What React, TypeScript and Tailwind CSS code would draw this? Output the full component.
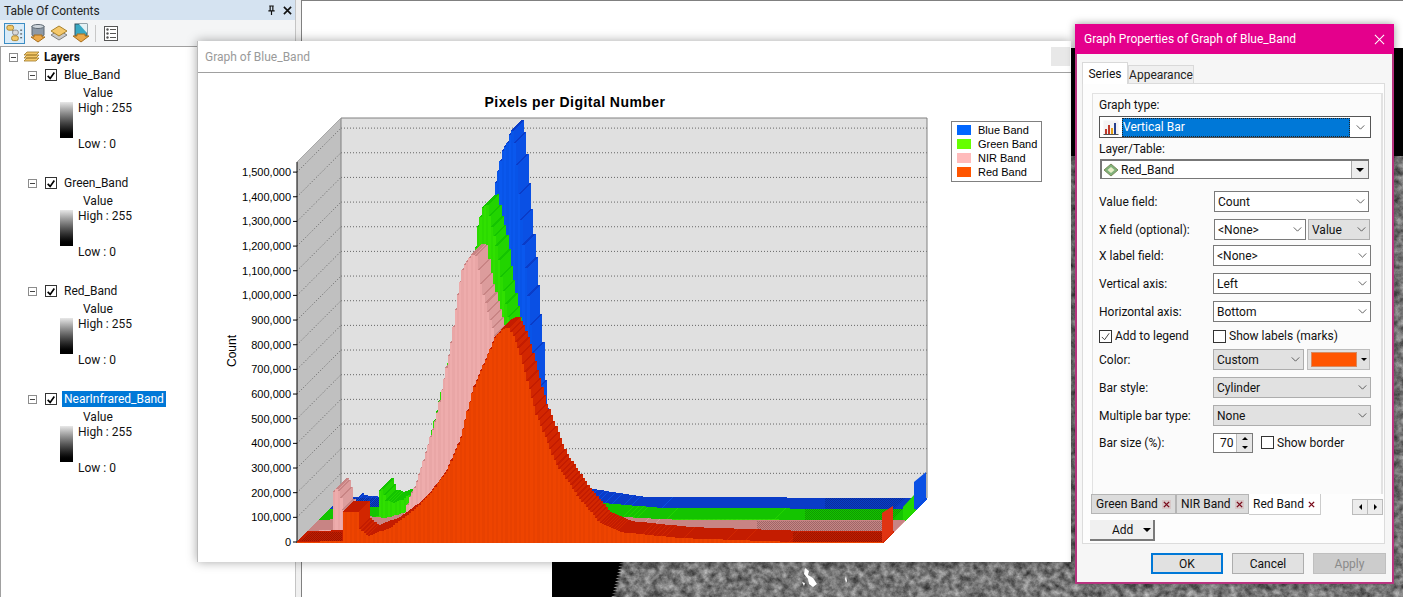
import type { ReactNode } from "react";

type Pt = [number, number];
type Palette = { front: string; alt: string; top: string; side: string };

const redPts: Pt[] = [[297,542],[342,541],[343,512],[358,512],[359,528],[368,536],[390,528],[413,511],[430,494],[447,471],[460,441],[473,390],[487,357],[495,338],[503,329],[508,327],[512,333],[519,351],[536,414],[556,464],[579,498],[600,523],[620,532],[680,538],[793,542],[883,542]];
const nirPts: Pt[] = [[308,531],[333,530],[334,492],[338,488],[342,500],[346,526],[375,529],[403,521],[410,497],[415,487],[423,463],[437,415],[445,375],[450,350],[452,337],[457,300],[463,267],[472,255],[476,254],[482,291],[491,324],[505,370],[520,420],[540,470],[560,500],[590,520],[612,528],[669,531],[894,531]];
const greenPts: Pt[] = [[319,520],[370,518],[378,516],[379,492],[383,488],[385,500],[393,503],[404,499],[415,490],[423,470],[476,247],[478,227],[483,207],[487,204],[492,228],[497,248],[502,284],[509,324],[530,400],[550,470],[575,503],[592,514],[652,519],[905,520]];
const bluePts: Pt[] = [[330,509],[349,508],[351,504],[354,506],[380,509],[470,500],[494,193],[498,172],[503,150],[508,142],[511,130],[512,131],[516,153],[517,174],[521,218],[524,251],[527,281],[529,311],[532,344],[534,374],[536,414],[550,470],[570,496],[582,500],[636,508],[916,509]];

const red: Palette = { front: "#ee4400", alt: "#e84100", top: "#c41c00", side: "#d22600" };
const nir: Palette = { front: "#eeacac", alt: "#e9a6a6", top: "#c88484", side: "#dc9c9c" };
const green: Palette = { front: "#30e000", alt: "#2bda00", top: "#14c400", side: "#22d400" };
const blue: Palette = { front: "#0a58ee", alt: "#0854e8", top: "#0a3cc8", side: "#0a50e4" };

const yAt = (pts: Pt[], x: number) => {
  for (let i = 1; i < pts.length; i++) {
    if (x <= pts[i][0]) {
      const [x0, y0] = pts[i - 1];
      const [x1, y1] = pts[i];
      return y0 + ((y1 - y0) * (x - x0)) / (x1 - x0 || 1);
    }
  }
  return pts[pts.length - 1][1];
};

function Bars({ pts, colors, base }: { pts: Pt[]; colors: Palette; base: number }) {
  const w = 586 / 256;
  const d = 11;
  const start = pts[0][0];
  const out: ReactNode[] = [];
  for (let i = 0; i < 256; i++) {
    const x = start + i * w;
    const y = yAt(pts, x + w / 2);
    out.push(
      <g key={i}>
        <polygon fill={colors.side} points={`${x + w},${y} ${x + w + d},${y - d} ${x + w + d},${base - d} ${x + w},${base}`} />
        <polygon fill={colors.top} points={`${x},${y} ${x + d},${y - d} ${x + w + d},${y - d} ${x + w},${y}`} />
        <rect x={x} y={y} width={w + 0.4} height={Math.max(base - y, 0)} fill={i % 2 ? colors.alt : colors.front} />
      </g>
    );
  }
  return <g shapeRendering="crispEdges">{out}</g>;
}

const ticks = Array.from({ length: 16 }, (_, i) => i);
const fmt = (i: number) => (i * 100000).toLocaleString("en-US");

function Chart() {
  return (
    <svg viewBox="198 73 873 488" className="block w-[873px] h-[488px]">
      <defs>
        <pattern id="dither" width="2" height="2" patternUnits="userSpaceOnUse">
          <rect width="1" height="1" fill="#000000" fillOpacity="0.22" />
          <rect x="1" y="1" width="1" height="1" fill="#000000" fillOpacity="0.22" />
        </pattern>
      </defs>
      <text x="575" y="107" textAnchor="middle" fontFamily="'Liberation Sans', sans-serif" fontWeight="700" fontSize="14" letterSpacing="0.45" fill="#000">
        Pixels per Digital Number
      </text>
      <polygon points="341,118 927,118 927,498 341,498" fill="#e0e0e0" />
      <polygon points="297,162 341,118 341,498 297,542" fill="#c0c0c0" />
      {ticks.slice(1).map((i) => (
        <g key={i} stroke="#666" strokeWidth="1" strokeDasharray="1 2">
          <line x1="341" x2="927" y1={498 - i * 24.66} y2={498 - i * 24.66} />
          <line x1="297" x2="341" y1={542 - i * 24.66} y2={498 - i * 24.66} />
        </g>
      ))}
      <path d="M341 498V118H927V498" fill="none" stroke="#808080" />
      <path d="M297 162L341 118" fill="none" stroke="#a8a8a8" />
      <path d="M297 162V543" stroke="#000" />
      {ticks.map((i) => (
        <g key={i}>
          <line x1="293" x2="297" y1={542 - i * 24.66} y2={542 - i * 24.66} stroke="#000" />
          <text x="291" y={546 - i * 24.66} textAnchor="end" fontFamily="'Liberation Sans', sans-serif" fontSize="11" fill="#000">
            {fmt(i)}
          </text>
        </g>
      ))}
      <text transform="translate(236 351) rotate(-90)" textAnchor="middle" fontFamily="'Liberation Sans', sans-serif" fontSize="12" fill="#000">
        Count
      </text>

      <Bars pts={bluePts} colors={blue} base={510} />
      <polygon points="914,482 926,472 926,498 914,510" fill="#0a50e4" />
      <polygon points="825,498 905,498 894,509 825,509" fill="url(#dither)" />
      <polygon points="352,498 380,498 380,509 352,509" fill="url(#dither)" />
      <Bars pts={greenPts} colors={green} base={521} />
      <polygon points="903,507 914,495 914,511 903,522" fill="#22d800" />
      <polygon points="805,509 903,509 893,520 805,520" fill="url(#dither)" />
      <Bars pts={nirPts} colors={nir} base={532} />
      <polygon points="757,521 892,521 882,531 757,531" fill="url(#dither)" />
      <Bars pts={redPts} colors={red} base={543} />
      <polygon points="793,532 882,532 882,542 793,542" fill="url(#dither)" />
      <polygon points="300,541 311,532 342,532 342,541" fill="url(#dither)" />
      <polygon points="882,513 893,506 893,533 882,543" fill="#e03412" />

      <rect x="951.5" y="121.5" width="90" height="60" fill="#fff" stroke="#808080" />
      {[
        ["Blue Band", "#0066ff"],
        ["Green Band", "#66ff00"],
        ["NIR Band", "#ffbbbb"],
        ["Red Band", "#ff5500"],
      ].map(([label, color], i) => (
        <g key={label}>
          <rect x="957" y={125 + i * 14} width="14" height="10" fill={color} />
          <text x="978" y={134 + i * 14} fontFamily="'Liberation Sans', sans-serif" fontSize="11" fill="#000">
            {label}
          </text>
        </g>
      ))}
    </svg>
  );
}

function Minus() {
  return (
    <span className="flex items-center justify-center w-[9px] h-[9px] border border-[#8c8c8c] bg-white">
      <span className="w-[5px] h-px bg-[#444]" />
    </span>
  );
}

function Tick({ on, thick }: { on?: boolean; thick?: boolean }) {
  return (
    <span className={thick ? "flex items-center justify-center w-[12px] h-[12px] border border-[#333] bg-white" : "flex items-center justify-center w-[13px] h-[13px] border border-[#333] bg-white"}>
      {on && (
        <svg viewBox="0 0 12 12" className="w-[11px] h-[11px]">
          <path d="M2 6.5L5 9.5L10 2.5" fill="none" stroke={thick ? "#000" : "#333"} strokeWidth={thick ? 2 : 1} />
        </svg>
      )}
    </span>
  );
}

function LayerGroup({ name, active }: { name: string; active?: boolean }) {
  return (
    <div className="h-[108px]">
      <div className="flex items-center h-[18px] pl-[27px]">
        <Minus />
        <span className="ml-[8px]"><Tick on thick /></span>
        <span className={active ? "ml-[5px] px-[2px] bg-[#0078d7] text-white" : "ml-[5px] px-[2px]"}>{name}</span>
      </div>
      <div className="h-[18px] pl-[82px] leading-[18px]">Value</div>
      <div className="flex pl-[59px]">
        <div className="w-[13px] h-[36px] bg-gradient-to-b from-[#e8e8e8] to-[#000]" />
        <div className="pl-[5px] -mt-[3px] leading-[18px]">
          <div>High : 255</div>
          <div className="mt-[18px]">Low : 0</div>
        </div>
      </div>
    </div>
  );
}

function NodesIcon() {
  return (
    <svg viewBox="0 0 20 20" className="w-[20px] h-[20px]">
      <path d="M6 5L13 14" stroke="#888" />
      <rect x="2" y="2" width="7" height="5" rx="2" fill="#f2c766" stroke="#a9822c" />
      <rect x="8" y="7" width="6" height="5" rx="2" fill="#d9d9d9" stroke="#8a8a8a" />
      <rect x="7" y="13" width="7" height="5" rx="2" fill="#f2c766" stroke="#a9822c" />
      <path d="M16 7h2M16 11h2M16 15h2" stroke="#333" />
    </svg>
  );
}

function DbIcon() {
  return (
    <svg viewBox="0 0 18 20" className="w-[18px] h-[20px]">
      <path d="M3 3v9c0 2 12 2 12 0V3z" fill="#8d99a6" stroke="#5d6872" />
      <ellipse cx="9" cy="3.5" rx="6" ry="2" fill="#cfd6dc" stroke="#5d6872" />
      <path d="M5 12h8v2h3l-7 5l-7-5h3z" fill="#eba94a" stroke="#a86f1c" />
    </svg>
  );
}

function LayersIcon() {
  return (
    <svg viewBox="0 0 18 20" className="w-[18px] h-[20px]">
      <path d="M1 12l8-5l8 5l-8 5z" fill="#c9c9c9" stroke="#808080" />
      <path d="M1 8l8-5l8 5l-8 5z" fill="#f5c86a" stroke="#a9822c" />
    </svg>
  );
}

function MapIcon() {
  return (
    <svg viewBox="0 0 18 20" className="w-[18px] h-[20px]">
      <rect x="3" y="1" width="12" height="12" fill="#39a9c4" stroke="#33525e" />
      <path d="M7 1h8v9z" fill="#e6f2f5" />
      <path d="M5 11h8v2h4l-8 6l-8-6h4z" fill="#eba94a" stroke="#a86f1c" />
    </svg>
  );
}

function OptionsIcon() {
  return (
    <svg viewBox="0 0 14 15" className="w-[14px] h-[15px]">
      <rect x="0.5" y="0.5" width="13" height="14" fill="#fff" stroke="#555" />
      <circle cx="3.5" cy="3.5" r="1.2" fill="#555" />
      <circle cx="3.5" cy="7.5" r="1.2" fill="#555" />
      <circle cx="3.5" cy="11.5" r="1.2" fill="#555" />
      <path d="M6 3.5h6M6 7.5h6M6 11.5h6" stroke="#555" />
    </svg>
  );
}

function Toc() {
  return (
    <aside className="w-[296px] h-full shrink-0 flex flex-col border-r border-[#c4c4c4]">
      <div className="h-[20px] bg-[#d5e3f1] flex items-center justify-between pl-[4px] pr-[3px] pt-[1px] text-[#222]">
        <span>Table Of Contents</span>
        <span className="flex items-center gap-[7px]">
          <svg viewBox="0 0 10 12" className="w-[9px] h-[11px]">
            <path d="M2.5 1h5M3.5 1v5M6.5 1v5M1.5 6.5h7M5 6.5V11" stroke="#111" strokeWidth="1.3" fill="none" />
          </svg>
          <svg viewBox="0 0 10 10" className="w-[9px] h-[9px]">
            <path d="M1 1l8 8M9 1l-8 8" stroke="#111" strokeWidth="1.8" />
          </svg>
        </span>
      </div>
      <div className="h-[27px] bg-[#f4f5f6] border-b border-[#a0a0a0] flex items-center pl-[4px]">
        <span className="w-[21px] h-[21px] flex items-center justify-center bg-[#d9ebf8] border border-[#3c8dc4]"><NodesIcon /></span>
        <span className="ml-[4px]"><DbIcon /></span>
        <span className="ml-[3px]"><LayersIcon /></span>
        <span className="ml-[4px]"><MapIcon /></span>
        <span className="ml-[5px] w-px h-[17px] bg-[#c8c8c8]" />
        <span className="ml-[8px]"><OptionsIcon /></span>
      </div>
      <div className="flex-1 bg-white border-l border-[#a0a0a0] pt-[1px]">
        <div className="flex items-center h-[18px] pl-[8px]">
          <Minus />
          <svg viewBox="0 0 17 13" className="ml-[5px] w-[17px] h-[13px]">
            <path d="M1 10l3-3h12l-3 3z M1 7l3-3h12l-3 3z M1 4l3-3h12l-3 3z" fill="#f5c86a" stroke="#a07a28" strokeWidth="0.8" />
          </svg>
          <span className="ml-[4px] font-bold">Layers</span>
        </div>
        <LayerGroup name="Blue_Band" />
        <LayerGroup name="Green_Band" />
        <LayerGroup name="Red_Band" />
        <LayerGroup name="NearInfrared_Band" active />
      </div>
    </aside>
  );
}

function MapView() {
  const teeth: string[] = [];
  for (let i = 0; i < 12; i++) {
    const y = 514 + i * 3;
    const x = 68 - i * 0.7;
    teeth.push(`${x + 4},${y} ${x - 1},${y + 1.5}`);
  }
  return (
    <div className="flex-1 ml-[5px] relative overflow-hidden bg-white border-l border-t border-[#808080]">
      <svg viewBox="0 0 851 549" className="absolute left-[250px] top-[47px] w-[851px] h-[549px]">
        <defs>
          <filter id="terrain" x="0" y="0" width="100%" height="100%" colorInterpolationFilters="sRGB">
            <feTurbulence type="fractalNoise" baseFrequency="0.14" numOctaves="5" seed="7" />
            <feColorMatrix values="0.7 0 0 0 0.12 0.7 0 0 0 0.12 0.7 0 0 0 0.12 0 0 0 0 1" />
          </filter>
        </defs>
        <rect width="851" height="549" filter="url(#terrain)" />
        <rect width="851" height="108" fill="#000" />
        <polygon points={`0,514 ${teeth.join(" ")} 60,549 0,549`} fill="#000" />
        <path d="M253 520l4 3l-1 4l5 3l4 6l-4 3l-4-3l-1-5l-4-5zM250 534l3 1l-1 3zM294 528l1 5l-1 2l-1-4z" fill="#fff" />
      </svg>
    </div>
  );
}

function Chevron() {
  return (
    <svg viewBox="0 0 10 6" className="w-[9px] h-[5px] shrink-0">
      <path d="M0.5 0.5L5 5L9.5 0.5" fill="none" stroke="#444" />
    </svg>
  );
}

function Select({ value, gray, className }: { value: string; gray?: boolean; className: string }) {
  return (
    <div className={`${gray ? "bg-[#e1e1e1] border-[#adadad]" : "bg-white border-[#7a7a7a]"} ${className} h-[21px] border flex items-center justify-between pl-[3px] pr-[3px]`}>
      <span>{value}</span>
      <Chevron />
    </div>
  );
}

function Row({ label, children, className }: { label: string; children: ReactNode; className: string }) {
  return (
    <div className={`${className} flex items-center h-[21px] pl-[6px]`}>
      <span className="w-[114px] shrink-0">{label}</span>
      {children}
    </div>
  );
}

function SeriesTab({ label, active, className }: { label: string; active?: boolean; className: string }) {
  return (
    <div className={`${className} ${active ? "bg-white h-[21px]" : "bg-[#dcdcdc] border border-[#b5b5b5] h-[20px]"} flex items-center justify-between pl-[4px] pr-[4px] whitespace-nowrap`}>
      <span>{label}</span>
      <span className={`${active ? "bg-white" : "bg-[#d8c8c8]"} w-[9px] h-[9px] flex items-center justify-center`}>
        <svg viewBox="0 0 8 8" className="w-[7px] h-[7px]">
          <path d="M1 1l6 6M7 1l-6 6" stroke="#7a0c1c" strokeWidth="1.6" />
        </svg>
      </span>
    </div>
  );
}

function Dialog() {
  return (
    <section className="absolute left-[1075px] top-[24px] w-[319px] h-[560px] flex flex-col bg-[#f6f6f6] border-x-2 border-b-2 border-[#b8337f] text-[#111] shadow-[0_0_8px_rgba(0,0,0,0.4)]">
      <header className="h-[30px] -mx-[2px] bg-[#e4008c] text-white flex items-center justify-between pl-[9px] pr-[9px]">
        <span>Graph Properties of Graph of Blue_Band</span>
        <svg viewBox="0 0 12 12" className="w-[11px] h-[11px]">
          <path d="M1 1l10 10M11 1L1 11" stroke="#fff" strokeWidth="1.1" />
        </svg>
      </header>
      <div className="flex items-end h-[29px] pl-[5px]">
        <div className="w-[46px] h-[22px] bg-white border-x border-t border-[#d9d9d9] flex items-center justify-center -mb-px relative">Series</div>
        <div className="w-[66px] h-[18px] bg-[#f0f0f0] border-x border-t border-[#d9d9d9] flex items-center justify-center text-[#222]">Appearance</div>
      </div>
      <div className="ml-[5px] w-[303px] h-[461px] bg-[#fdfdfd] border border-[#dcdcdc] pt-[9px] pl-[9px]">
        <div className="w-[291px] h-[401px] bg-[#fbfbfb] border-t border-l border-r-2 border-[#e2e2e2] pr-[10px]">
          <div className="h-[22px] pl-[6px] flex items-center">Graph type:</div>
          <div className="ml-[6px] h-[22px] border border-[#555] bg-white flex items-center pl-[3px] pr-[5px]">
            <svg viewBox="0 0 16 15" className="w-[16px] h-[15px] shrink-0">
              <rect x="0.5" y="0.5" width="15" height="14" fill="#f4f4f4" />
              <path d="M2 14V9h2v5zM5 14V5h2v9z" fill="#c0392b" />
              <path d="M8 14V8h2v6z" fill="#e6a117" />
              <path d="M11 14V3h2v11z" fill="#27408b" />
              <path d="M0.5 14.5h15" stroke="#555" />
            </svg>
            <span className="ml-[3px] flex-1 h-[19px] bg-[#0078d7] text-white pl-[1px] outline-1 outline-dotted outline-[#222] -outline-offset-1 leading-[19px]">Vertical Bar</span>
            <span className="ml-[6px]"><Chevron /></span>
          </div>
          <div className="h-[21px] pl-[6px] flex items-center">Layer/Table:</div>
          <div className="ml-[7px] mr-[2px] h-[20px] border border-[#777] border-t-2 border-l-2 bg-white flex items-center justify-between pl-[1px]">
            <span className="flex items-center">
              <svg viewBox="0 0 16 14" className="w-[16px] h-[14px]">
                <path d="M8 1l7 6l-7 6l-7-6z" fill="#7fb27a" stroke="#7b8a5a" />
                <path d="M8 4l3.5 3L8 10L4.5 7z" fill="#e8efc8" />
              </svg>
              <span className="ml-[2px]">Red_Band</span>
            </span>
            <span className="w-[17px] h-full bg-[#ededed] border-l border-[#aaa] flex items-center justify-center">
              <span className="w-0 h-0 border-x-[4px] border-x-transparent border-t-[4px] border-t-black" />
            </span>
          </div>
          <Row label="Value field:" className="mt-[12px]">
            <Select value="Count" className="w-[155px] ml-[1px]" />
          </Row>
          <Row label="X field (optional):" className="mt-[7px]">
            <Select value="<None>" className="w-[92px] ml-[1px]" />
            <Select value="Value" gray className="w-[62px] ml-[2px]" />
          </Row>
          <Row label="X label field:" className="mt-[5px]">
            <Select value="<None>" className="w-[158px]" />
          </Row>
          <Row label="Vertical axis:" className="mt-[7px]">
            <Select value="Left" className="w-[158px]" />
          </Row>
          <Row label="Horizontal axis:" className="mt-[7px]">
            <Select value="Bottom" className="w-[158px]" />
          </Row>
          <div className="mt-[7px] h-[14px] flex items-center pl-[6px]">
            <div className="w-[114px] flex items-center gap-[3px]"><Tick on /><span>Add to legend</span></div>
            <div className="flex items-center gap-[3px]"><Tick /><span>Show labels (marks)</span></div>
          </div>
          <Row label="Color:" className="mt-[6px]">
            <Select value="Custom" gray className="w-[91px]" />
            <div className="ml-[3px] w-[63px] h-[21px] bg-[#e1e1e1] border border-[#bdbdbd] flex items-center pl-[3px]">
              <span className="w-[46px] h-[15px] bg-[#ff5500] border border-[#d88a60]" />
              <span className="ml-[4px] w-0 h-0 border-x-[3px] border-x-transparent border-t-[3px] border-t-black" />
            </div>
          </Row>
          <Row label="Bar style:" className="mt-[7px]">
            <Select value="Cylinder" gray className="w-[158px]" />
          </Row>
          <Row label="Multiple bar type:" className="mt-[7px]">
            <Select value="None" gray className="w-[158px]" />
          </Row>
          <Row label="Bar size (%):" className="mt-[6px]">
            <div className="w-[40px] h-[20px] bg-white border border-[#7a7a7a] flex items-center justify-between pl-[6px]">
              <span>70</span>
              <span className="w-[16px] h-full bg-[#e6e6e6] flex flex-col items-center justify-around border-l border-[#bbb]">
                <span className="w-0 h-0 border-x-[3px] border-x-transparent border-b-[3px] border-b-black" />
                <span className="w-0 h-0 border-x-[3px] border-x-transparent border-t-[3px] border-t-black" />
              </span>
            </div>
            <span className="ml-[8px]"><Tick /></span>
            <span className="ml-[3px]">Show border</span>
          </Row>
        </div>
        <div className="-ml-[1px] flex items-start h-[21px]">
          <SeriesTab label="Green Band" className="w-[85px]" />
          <SeriesTab label="NIR Band" className="w-[73px]" />
          <SeriesTab label="Red Band" active className="w-[72px] border-r border-b border-[#ccc]" />
          <div className="ml-[31px] mt-[5px] flex w-[31px] h-[16px] bg-[#ececec] border border-[#bbb]">
            <span className="flex-1 flex items-center justify-center border-r border-[#bbb]">
              <span className="w-0 h-0 border-y-[3px] border-y-transparent border-r-[3px] border-r-black" />
            </span>
            <span className="flex-1 flex items-center justify-center">
              <span className="w-0 h-0 border-y-[3px] border-y-transparent border-l-[3px] border-l-black" />
            </span>
          </div>
        </div>
        <div className="mt-[5px] -ml-[2px] w-[65px] h-[21px] bg-[#f0f0f0] border-r-2 border-b-2 border-[#7a7a7a] flex items-center pl-[22px]">
          <span>Add</span>
          <span className="ml-[10px] w-0 h-0 border-x-[4px] border-x-transparent border-t-[4px] border-t-black" />
        </div>
      </div>
      <div className="flex h-[21px] mt-[9px] pl-[74px] gap-[9px]">
        <button className="w-[72px] bg-[#e1e1e1] border-2 border-[#0078d7]">OK</button>
        <button className="w-[72px] bg-[#e1e1e1] border border-[#adadad]">Cancel</button>
        <button className="w-[73px] bg-[#cccccc] border border-[#bfbfbf] text-[#8a8a8a]">Apply</button>
      </div>
    </section>
  );
}

function GraphWindow() {
  return (
    <section className="absolute left-[197px] top-[41px] w-[874px] h-[521px] bg-white border-l border-[#bbb] shadow-[0_0_10px_rgba(0,0,0,0.35)] flex flex-col">
      <header className="h-[32px] shrink-0 border-b border-[#a0a0a0] flex items-center justify-between pl-[7px] pr-[1px] text-[#9a9a9a]">
        <span>Graph of Blue_Band</span>
        <span className="w-[19px] h-[19px] bg-[#e8e8e8]" />
      </header>
      <Chart />
    </section>
  );
}

export default function App() {
  return (
    <div className="relative w-[1403px] h-[597px] overflow-hidden flex bg-[#f0f0f0] text-[12px] leading-[16px] text-[#111] font-['Roboto',sans-serif]">
      <Toc />
      <MapView />
      <GraphWindow />
      <Dialog />
    </div>
  );
}
